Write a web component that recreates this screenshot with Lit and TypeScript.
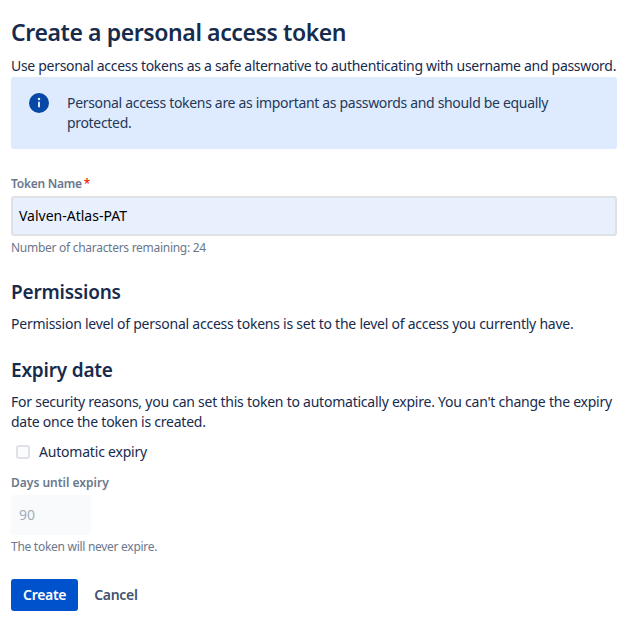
import { LitElement, html, css } from "lit";
import { customElement } from "lit/decorators.js";

@customElement("app-root")
export class AppRoot extends LitElement {
  static styles = css`
    :host {
      display: block;
      width: 628px;
      height: 630px;
      box-sizing: border-box;
      padding: 16px 11px 0 11px;
      background: #fff;
      color: #172b4d;
      font-family: "Noto Sans", "Open Sans", sans-serif;
      font-size: 14px;
      line-height: 20px;
      overflow: hidden;
    }
    * { box-sizing: border-box; }
    h1 {
      margin: 0;
      font-size: 23px;
      line-height: 32px;
      font-weight: 600;
      letter-spacing: -0.4px;
    }
    h2 {
      margin: 0;
      font-size: 19px;
      line-height: 24px;
      font-weight: 600;
      letter-spacing: -0.2px;
    }
    p { margin: 0; }
    .t { letter-spacing: -0.24px; }
    .intro { margin-top: 8px; white-space: nowrap; letter-spacing: -0.3px; }
    .banner {
      margin-top: 1px;
      height: 72px;
      background: #deebff;
      border-radius: 3px;
      padding: 16px;
      display: flex;
      gap: 18px;
    }
    .banner svg { flex: none; margin: 0 0 0 2px; width: 20px; height: 20px; }
    .banner p { padding-right: 18px; color: #253858; letter-spacing: -0.32px; }
    .label {
      font-size: 12px;
      line-height: 16px;
      font-weight: 600;
      color: #6b778c;
    }
    .label b { color: #de350b; font-weight: 600; margin-left: 2px; }
    .name-label { margin-top: 27px; letter-spacing: -0.25px; }
    .input {
      margin-top: 4px;
      height: 40px;
      border: 2px solid #dfe1e6;
      border-radius: 3px;
      background: #e8f0fe;
      color: #000;
      padding: 0 6px;
      display: flex;
      align-items: center;
    }
    .help {
      margin-top: 4px;
      font-size: 12px;
      line-height: 16px;
      color: #6b778c;
      letter-spacing: -0.28px;
    }
    .perm { margin-top: 24px; }
    .perm-p { margin-top: 10px; }
    .exp { margin-top: 24px; }
    .exp-p { margin-top: 10px; }
    .check {
      margin-top: 10px;
      display: flex;
      align-items: center;
      gap: 9px;
      padding-left: 5px;
      height: 20px;
      letter-spacing: -0.2px;
    }
    .box {
      width: 14px;
      height: 14px;
      border: 2px solid #dfe1e6;
      border-radius: 3px;
      background: #fafbfc;
    }
    .days-label { margin-top: 13px; }
    .days {
      margin-top: 4px;
      width: 80px;
      height: 40px;
      background: #f9fafc;
      border-radius: 3px;
      color: #a5adba;
      padding: 0 8px;
      display: flex;
      align-items: center;
    }
    .actions {
      margin-top: 24px;
      display: flex;
      align-items: center;
      gap: 4px;
    }
    .btn {
      height: 32px;
      border-radius: 3px;
      padding: 0 12px;
      display: flex;
      align-items: center;
      font-weight: 600;
      letter-spacing: -0.3px;
    }
    .create { background: #0052cc; color: #fff; }
    .cancel { color: #42526e; }
  `;

  render() {
    return html`
      <h1>Create a personal access token</h1>
      <p class="intro">Use personal access tokens as a safe alternative to authenticating with username and password.</p>
      <div class="banner">
        <svg viewBox="0 0 20 20" aria-hidden="true">
          <circle cx="10" cy="10" r="10" fill="#0747a6"></circle>
          <circle cx="10" cy="6" r="1.25" fill="#deebff"></circle>
          <rect x="9" y="8.6" width="2" height="6" rx="1" fill="#deebff"></rect>
        </svg>
        <p>Personal access tokens are as important as passwords and should be equally protected.</p>
      </div>
      <div class="label name-label">Token Name<b>*</b></div>
      <div class="input">Valven-Atlas-PAT</div>
      <div class="help">Number of characters remaining: 24</div>
      <h2 class="perm">Permissions</h2>
      <p class="perm-p t">Permission level of personal access tokens is set to the level of access you currently have.</p>
      <h2 class="exp">Expiry date</h2>
      <p class="exp-p t">For security reasons, you can set this token to automatically expire. You can't change the expiry date once the token is created.</p>
      <div class="check"><span class="box"></span><span>Automatic expiry</span></div>
      <div class="label days-label">Days until expiry</div>
      <div class="days">90</div>
      <div class="help">The token will never expire.</div>
      <div class="actions">
        <div class="btn create">Create</div>
        <div class="btn cancel">Cancel</div>
      </div>
    `;
  }
}
